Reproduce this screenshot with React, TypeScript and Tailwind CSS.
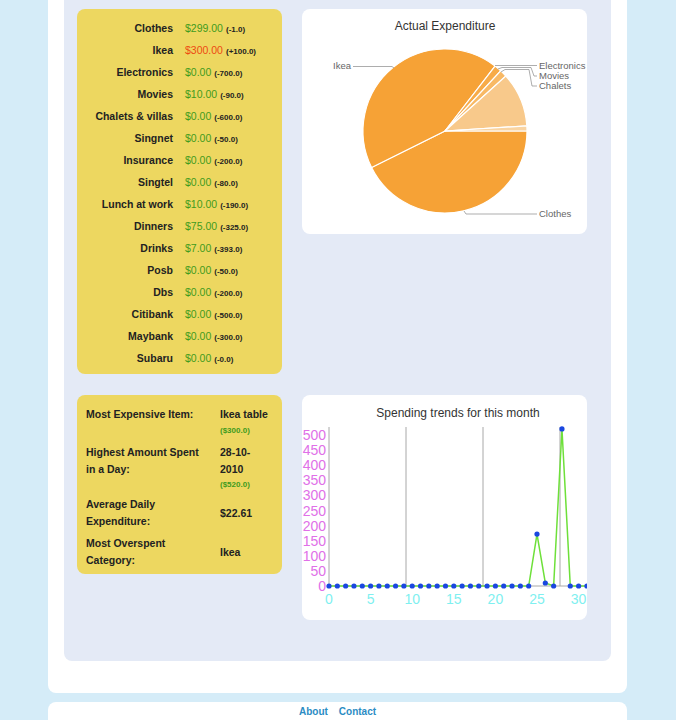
import React from 'react';

const rows = [
    { name: 'Clothes', amount: '$299.00', diff: '(-1.0)' },
    { name: 'Ikea', amount: '$300.00', diff: '(+100.0)', over: true },
    { name: 'Electronics', amount: '$0.00', diff: '(-700.0)' },
    { name: 'Movies', amount: '$10.00', diff: '(-90.0)' },
    { name: 'Chalets & villas', amount: '$0.00', diff: '(-600.0)' },
    { name: 'Singnet', amount: '$0.00', diff: '(-50.0)' },
    { name: 'Insurance', amount: '$0.00', diff: '(-200.0)' },
    { name: 'Singtel', amount: '$0.00', diff: '(-80.0)' },
    { name: 'Lunch at work', amount: '$10.00', diff: '(-190.0)' },
    { name: 'Dinners', amount: '$75.00', diff: '(-325.0)' },
    { name: 'Drinks', amount: '$7.00', diff: '(-393.0)' },
    { name: 'Posb', amount: '$0.00', diff: '(-50.0)' },
    { name: 'Dbs', amount: '$0.00', diff: '(-200.0)' },
    { name: 'Citibank', amount: '$0.00', diff: '(-500.0)' },
    { name: 'Maybank', amount: '$0.00', diff: '(-300.0)' },
    { name: 'Subaru', amount: '$0.00', diff: '(-0.0)' },
];

const slices = [
    { value: 299, color: '#f6a236' },
    { value: 300, color: '#f6a236' },
    { value: 10, color: '#f7ab48' },
    { value: 10, color: '#f8b965' },
    { value: 75, color: '#f8c98b' },
    { value: 7, color: '#f9d4a2' },
];

// daily totals for the line chart, day 0..31
const daily = Array.from({ length: 32 }, (_, d) => (d === 25 ? 172 : d === 26 ? 10 : d === 28 ? 520 : 0));

const PieChart: React.FC = () => {
    const cx = 143;
    const cy = 122;
    const r = 82;
    const total = slices.reduce((s, x) => s + x.value, 0);
    const pt = (deg: number) => {
        const a = (deg * Math.PI) / 180;
        return [cx + r * Math.cos(a), cy + r * Math.sin(a)];
    };
    let start = 0;
    const paths = slices.map((s, i) => {
        const sweep = (s.value / total) * 360;
        const [x0, y0] = pt(start);
        const [x1, y1] = pt(start + sweep);
        const large = sweep > 180 ? 1 : 0;
        const d = `M${cx},${cy} L${x0},${y0} A${r},${r} 0 ${large} 1 ${x1},${y1} Z`;
        start += sweep;
        return <path key={i} d={d} fill={s.color} stroke="#fff" strokeWidth={1.2} />;
    });

    return (
        <svg width={285} height={225} className="block">
            <text x={143} y={21} textAnchor="middle" fontSize={12} fill="#333">
                Actual Expenditure
            </text>
            {paths}
            <g fill="none" stroke="#8a8a8a" strokeWidth={0.7}>
                <polyline points="51,57.5 90,57.5 92,59" />
                <polyline points="193,56.5 197,56.5 235,56.5" />
                <polyline points="196,60 200,58.5 229,58.5 232,67 235,67" />
                <polyline points="199,63 203,60.5 227,60.5 230,77 235,77" />
                <polyline points="162,202 164,205 235,205" />
            </g>
            <g fontSize={9.5} fill="#666">
                <text x={49} y={60} textAnchor="end">Ikea</text>
                <text x={237} y={60}>Electronics</text>
                <text x={237} y={70}>Movies</text>
                <text x={237} y={80}>Chalets</text>
                <text x={237} y={208}>Clothes</text>
            </g>
        </svg>
    );
};

const LineChart: React.FC = () => {
    const x0 = 27;
    const base = 191;
    const sx = 8.32;
    const sy = 151 / 500;
    const pts = daily.map((v, d) => [x0 + d * sx, base - v * sy]);
    return (
        <svg width={285} height={225} className="block">
            <text x={156} y={22} textAnchor="middle" fontSize={12} fill="#333">
                Spending trends for this month
            </text>
            <g stroke="#a8a8a8" strokeWidth={1}>
                <line x1={x0} y1={32} x2={x0} y2={base} />
                <line x1={104} y1={32} x2={104} y2={base} />
                <line x1={181} y1={32} x2={181} y2={base} />
                <line x1={258} y1={32} x2={258} y2={base} />
                <line x1={x0} y1={base} x2={285} y2={base} />
            </g>
            <g fontSize={14} fill="#e070e8" textAnchor="end">
                {[0, 50, 100, 150, 200, 250, 300, 350, 400, 450, 500].map((v) => (
                    <text key={v} x={24} y={base - v * sy + 5}>
                        {v}
                    </text>
                ))}
            </g>
            <g fontSize={14} fill="#7ff0f0" textAnchor="middle">
                {[0, 5, 10, 15, 20, 25, 30].map((d) => (
                    <text key={d} x={x0 + d * sx} y={209}>
                        {d}
                    </text>
                ))}
            </g>
            <polyline points={pts.map((p) => p.join(',')).join(' ')} fill="none" stroke="#6ee03a" strokeWidth={1.5} />
            {pts.map((p, i) => (
                <circle key={i} cx={p[0]} cy={p[1]} r={2.6} fill="#1a47e0" />
            ))}
        </svg>
    );
};

const App: React.FC = () => {
    return (
        <div className="min-h-screen bg-[#d5ecf8] font-['Liberation_Sans',Arial,sans-serif] text-[#222]">
            <div className="ml-[48px] w-[579px] bg-white rounded-b-[8px] px-4 pb-8">
                <div className="bg-[#e4eaf6] rounded-b-[8px] pl-[13px] pr-[24px] pt-[9px] pb-[41px]">
                    <div className="grid grid-cols-[205px_285px] gap-x-5 gap-y-[21px] items-start">
                        {/* Budget table */}
                        <div className="bg-[#edd760] rounded-[8px] pt-[9px] pb-[4px]">
                            {rows.map((r) => (
                                <div key={r.name} className="grid grid-cols-[96px_1fr] gap-x-3 h-[22px] items-center">
                                    <div className="text-right text-[10.5px] font-bold whitespace-nowrap">{r.name}</div>
                                    <div className="flex items-baseline gap-[3px] whitespace-nowrap">
                                        <span className={`text-[10.5px] ${r.over ? 'text-[#ee4a12]' : 'text-[#3f9b1d]'}`}>
                                            {r.amount}
                                        </span>
                                        <span className="text-[8px] font-bold">{r.diff}</span>
                                    </div>
                                </div>
                            ))}
                        </div>

                        <div className="bg-white rounded-[8px]">
                            <PieChart />
                        </div>

                        {/* Summary */}
                        <div className="bg-[#edd760] rounded-[8px] pl-[9px] pr-[6px] pt-[11px] pb-[5px] text-[10.5px] font-bold leading-[17px] flex flex-col gap-[5px]">
                            <div className="grid grid-cols-[120px_1fr] gap-x-[14px] items-start">
                                <div>Most Expensive Item:</div>
                                <div>
                                    <div>Ikea table</div>
                                    <div className="text-[8px] leading-[15px] text-[#3f9b1d]">($300.0)</div>
                                </div>
                            </div>
                            <div className="grid grid-cols-[120px_1fr] gap-x-[14px] items-start mt-[1px]">
                                <div>Highest Amount Spent in a Day:</div>
                                <div>
                                    <div>28-10-</div>
                                    <div>2010</div>
                                    <div className="text-[8px] leading-[13px] text-[#3f9b1d]">($520.0)</div>
                                </div>
                            </div>
                            <div className="grid grid-cols-[120px_1fr] gap-x-[14px] items-center">
                                <div>Average Daily Expenditure:</div>
                                <div>$22.61</div>
                            </div>
                            <div className="grid grid-cols-[120px_1fr] gap-x-[14px] items-center">
                                <div>Most Overspent Category:</div>
                                <div>Ikea</div>
                            </div>
                        </div>

                        <div className="bg-white rounded-[8px]">
                            <LineChart />
                        </div>
                    </div>
                </div>
            </div>

            <div className="ml-[48px] mt-[9px] w-[579px] bg-white rounded-t-[8px] h-[30px] flex justify-center gap-[11px] pt-[2px] text-[10px] font-bold text-[#2b8cc4]">
                <a href="#">About</a>
                <a href="#">Contact</a>
            </div>
        </div>
    );
};

export default App;
